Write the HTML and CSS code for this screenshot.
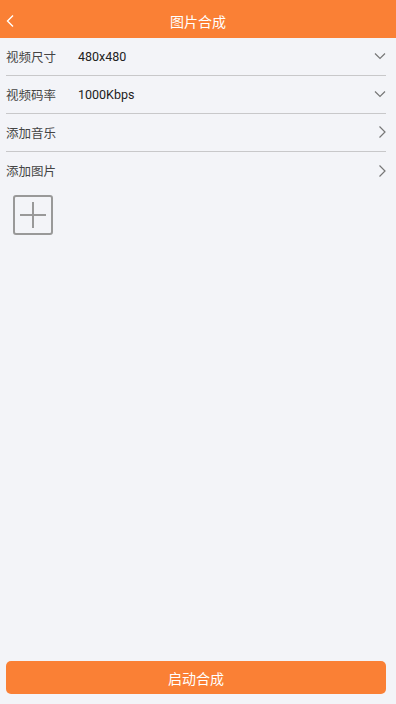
FILE: index.html
```html
<!DOCTYPE html>
<html lang="zh">
<head>
  <meta charset="UTF-8" />
  <meta name="viewport" content="width=device-width, initial-scale=1.0"/>
  <title>图片合成</title>
  <link rel="stylesheet" href="styles.css">
</head>
<body>

<div class="page">
  <div class="header">
    <svg class="back" width="12" height="14" viewBox="0 0 12 14">
      <path d="M8 1.5 L2.5 7 L8 12.5" fill="none" stroke="#fff" stroke-width="1.4"/>
    </svg>
    <div class="title">图片合成</div>
  </div>

  <div class="list">
    <div class="row">
      <span class="label">视频尺寸</span>
      <span class="value">480x480</span>
      <svg class="arrow" width="12" height="10" viewBox="0 0 12 10">
        <path d="M1 2.5 L6 7.5 L11 2.5" fill="none" stroke="#777" stroke-width="1.2"/>
      </svg>
    </div>
    <div class="row">
      <span class="label">视频码率</span>
      <span class="value">1000Kbps</span>
      <svg class="arrow" width="12" height="10" viewBox="0 0 12 10">
        <path d="M1 2.5 L6 7.5 L11 2.5" fill="none" stroke="#777" stroke-width="1.2"/>
      </svg>
    </div>
    <div class="row">
      <span class="label">添加音乐</span>
      <svg class="arrow" width="8" height="14" viewBox="0 0 8 14">
        <path d="M1.5 1.5 L7 7 L1.5 12.5" fill="none" stroke="#777" stroke-width="1.2"/>
      </svg>
    </div>
    <div class="row last">
      <span class="label">添加图片</span>
      <svg class="arrow" width="8" height="14" viewBox="0 0 8 14">
        <path d="M1.5 1.5 L7 7 L1.5 12.5" fill="none" stroke="#777" stroke-width="1.2"/>
      </svg>
    </div>
  </div>

  <div class="pictures">
    <div class="add-box">
      <svg width="26" height="26" viewBox="0 0 26 26">
        <path d="M13 0 V26 M0 13 H26" stroke="#999" stroke-width="2"/>
      </svg>
    </div>
  </div>

  <div class="footer">
    <button class="start">启动合成</button>
  </div>
</div>

</body>
</html>
```

FILE: styles.css
```css
:root {
  --orange: #fa8035;
  --bg: #f3f4f8;
  --line: #c8c8ca;
  --text: #333;
}

* {
  box-sizing: border-box;
  margin: 0;
  padding: 0;
  font-family: Roboto, "Noto Sans CJK SC", sans-serif;
}

body {
  background: var(--bg);
  color: var(--text);
}

.page {
  height: 704px;
  display: flex;
  flex-direction: column;
}

.header {
  height: 38px;
  background: var(--orange);
  display: flex;
  align-items: center;
  justify-content: center;
  position: relative;
  padding-top: 3px;
}

.header .back {
  position: absolute;
  left: 5px;
  top: 14px;
}

.header .title {
  color: #fff;
  font-size: 14px;
}

.list {
  padding: 0 10px 0 6px;
}

.row {
  height: 38px;
  display: flex;
  align-items: center;
  border-bottom: 1px solid var(--line);
  font-size: 12.5px;
  padding-bottom: 1px;
}

.row.last {
  border-bottom: none;
}

.row .label {
  width: 72px;
  color: #444;
}

.row .value {
  color: #222;
}

.row .arrow {
  margin-left: auto;
}

.pictures {
  padding: 5px 13px;
  flex: 1;
}

.add-box {
  width: 40px;
  height: 40px;
  border: 2px solid #999;
  border-radius: 3px;
  display: flex;
  align-items: center;
  justify-content: center;
}

.footer {
  padding: 0 10px 10px 6px;
}

.start {
  width: 100%;
  height: 33px;
  border: none;
  border-radius: 5px;
  background: var(--orange);
  color: #fff;
  font-size: 14px;
}
```
